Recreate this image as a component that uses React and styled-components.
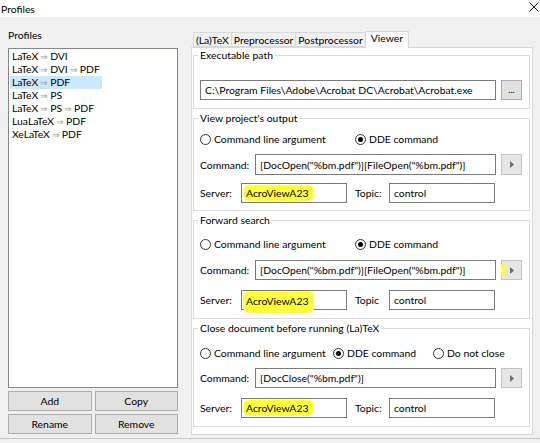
import React from 'react'
import styled, { createGlobalStyle } from 'styled-components'

const GlobalStyle = createGlobalStyle`
  html, body {
    margin: 0;
    padding: 0;
    background: #f0f0f0;
  }
  body {
    font-family: Lato, "Noto Sans", sans-serif;
    font-size: 10.4px;
    color: #000;
  }
`

const profiles = [
  ['LaTeX', 'DVI'],
  ['LaTeX', 'DVI', 'PDF'],
  ['LaTeX', 'PDF'],
  ['LaTeX', 'PS'],
  ['LaTeX', 'PS', 'PDF'],
  ['LuaLaTeX', 'PDF'],
  ['XeLaTeX', 'PDF'],
]

const tabs = ['(La)TeX', 'Preprocessor', 'Postprocessor', 'Viewer']

const App = () => {
  return (
    <>
      <GlobalStyle />
      <Window>
        <TitleBar>
          <span>Profiles</span>
          <CloseIcon viewBox="0 0 10 10">
            <path d="M0.5 0.5 L9.5 9.5 M9.5 0.5 L0.5 9.5" stroke="#111" strokeWidth="1" />
          </CloseIcon>
        </TitleBar>

        <Body>
          <LeftCol>
            <SectionLabel>Profiles</SectionLabel>
            <ListBox>
              {profiles.map((p, i) => (
                <ListItem key={i} selected={i === 2}>
                  {p.map((part, j) => (
                    <React.Fragment key={j}>
                      {j > 0 && <Arrow>⇒</Arrow>}
                      {part}
                    </React.Fragment>
                  ))}
                </ListItem>
              ))}
            </ListBox>
            <ButtonGrid>
              <PushButton>Add</PushButton>
              <PushButton>Copy</PushButton>
              <PushButton>Rename</PushButton>
              <PushButton>Remove</PushButton>
            </ButtonGrid>
          </LeftCol>

          <RightCol>
            <TabBar>
              {tabs.map((t) => (
                <Tab key={t} active={t === 'Viewer'}>{t}</Tab>
              ))}
            </TabBar>
            <TabPanel>
              <Group pb={8}>
                <legend>Executable path</legend>
                <Row pt={18}>
                  <TextBox>C:\Program Files\Adobe\Acrobat DC\Acrobat\Acrobat.exe</TextBox>
                  <SmallButton>...</SmallButton>
                </Row>
              </Group>

              <Group pb={7}>
                <legend>View project's output</legend>
                <RadioRow pt={7}>
                  <Radio w={155}>Command line argument</Radio>
                  <Radio checked>DDE command</Radio>
                </RadioRow>
                <Row pt={8}>
                  <FieldLabel w={55}>Command:</FieldLabel>
                  <TextBox h={21}>[DocOpen("%bm.pdf")][FileOpen("%bm.pdf")]</TextBox>
                  <ArrowButton h={21}><Tri /></ArrowButton>
                </Row>
                <Row pt={8}>
                  <FieldLabel w={41}>Server:</FieldLabel>
                  <ShortBox><Marker>AcroViewA23</Marker></ShortBox>
                  <FieldLabel w={34} ml={8}>Topic:</FieldLabel>
                  <ShortBox>control</ShortBox>
                </Row>
              </Group>

              <Group pb={8}>
                <legend>Forward search</legend>
                <RadioRow pt={10}>
                  <Radio w={155}>Command line argument</Radio>
                  <Radio checked>DDE command</Radio>
                </RadioRow>
                <Row pt={9}>
                  <FieldLabel w={55}>Command:</FieldLabel>
                  <TextBox>[DocOpen("%bm.pdf")][FileOpen("%bm.pdf")]</TextBox>
                  <ArrowButton>
                    <Tri />
                    <Stroke />
                  </ArrowButton>
                </Row>
                <Row pt={10}>
                  <FieldLabel w={41}>Server:</FieldLabel>
                  <ShortBox><Marker tall>AcroViewA23</Marker></ShortBox>
                  <FieldLabel w={34} ml={8}>Topic</FieldLabel>
                  <ShortBox>control</ShortBox>
                </Row>
              </Group>

              <Group pb={8}>
                <legend>Close document before running (La)TeX</legend>
                <RadioRow pt={11}>
                  <Radio w={133}>Command line argument</Radio>
                  <Radio checked w={100}>DDE command</Radio>
                  <Radio>Do not close</Radio>
                </RadioRow>
                <Row pt={8}>
                  <FieldLabel w={55}>Command:</FieldLabel>
                  <TextBox>[DocClose("%bm.pdf")]</TextBox>
                  <ArrowButton><Tri /></ArrowButton>
                </Row>
                <Row pt={10}>
                  <FieldLabel w={41}>Server:</FieldLabel>
                  <ShortBox><Marker>AcroViewA23</Marker></ShortBox>
                  <FieldLabel w={34} ml={8}>Topic:</FieldLabel>
                  <ShortBox>control</ShortBox>
                </Row>
              </Group>
            </TabPanel>
          </RightCol>
        </Body>
        <BottomEdge />
      </Window>
    </>
  )
}

const Radio = ({ checked, w, children }) => (
  <RadioItem w={w}>
    <RadioCircle checked={checked} />
    <span>{children}</span>
  </RadioItem>
)

const Tri = () => (
  <svg width="4" height="7" viewBox="0 0 4 7">
    <polygon points="0,0 4,3.5 0,7" fill="#6d6d6d" />
  </svg>
)

const Window = styled.div`
  width: 540px;
  height: 443px;
  display: flex;
  flex-direction: column;
  background: #f0f0f0;
  overflow: hidden;
`

const TitleBar = styled.div`
  height: 17px;
  flex-shrink: 0;
  background: #fff;
  display: flex;
  justify-content: space-between;
  align-items: center;
  padding: 0 1px 0 1px;
  line-height: 16px;
`

const CloseIcon = styled.svg`
  width: 10px;
  height: 10px;
  margin-top: -3px;
`

const Body = styled.div`
  flex: 1;
  min-height: 0;
  display: flex;
  padding: 0 7px 0 8px;
  gap: 13px;
`

const LeftCol = styled.div`
  width: 170px;
  flex-shrink: 0;
  display: flex;
  flex-direction: column;
  padding-top: 11px;
`

const SectionLabel = styled.div`
  line-height: 14px;
  margin-bottom: 6px;
`

const ListBox = styled.div`
  height: 340px;
  box-sizing: border-box;
  background: #fff;
  border: 1px solid #828790;
  padding: 1px 1px;
`

const ListItem = styled.div`
  width: 90px;
  height: 13px;
  line-height: 13px;
  padding-left: 2px;
  white-space: nowrap;
  background: ${(p) => (p.selected ? '#cce8ff' : 'transparent')};
`

const Arrow = styled.span`
  color: #9a9a9a;
  font-size: 9px;
  margin: 0 2px;
`

const ButtonGrid = styled.div`
  display: grid;
  grid-template-columns: 1fr 1fr;
  gap: 3px;
  margin-top: 3px;
`

const PushButton = styled.div`
  height: 20px;
  box-sizing: border-box;
  background: #e1e1e1;
  border: 1px solid #adadad;
  display: flex;
  align-items: center;
  justify-content: center;
`

const RightCol = styled.div`
  flex: 1;
  min-width: 0;
  display: flex;
  flex-direction: column;
  padding-top: 13px;
`

const TabBar = styled.div`
  display: flex;
  align-items: flex-end;
  height: 17px;
  padding-left: 3px;
  position: relative;
  z-index: 1;
`

const Tab = styled.div`
  height: ${(p) => (p.active ? '17px' : '15px')};
  box-sizing: border-box;
  padding: 0 ${(p) => (p.active ? '5px' : '2px')};
  line-height: ${(p) => (p.active ? '13px' : '14px')};
  background: ${(p) => (p.active ? '#fff' : '#f0f0f0')};
  border: 1px solid #d9d9d9;
  border-bottom: ${(p) => (p.active ? 'none' : '1px solid #d9d9d9')};
  margin-left: -1px;
  margin-bottom: ${(p) => (p.active ? '-1px' : '0')};
  white-space: nowrap;
`

const TabPanel = styled.div`
  height: 388px;
  box-sizing: border-box;
  background: #fff;
  border: 1px solid #d9d9d9;
  padding: 0 2px 0 1px;
  display: flex;
  flex-direction: column;
  gap: 2px;
`

const Group = styled.fieldset`
  margin: 0;
  border: 1px solid #dcdcdc;
  padding: 0 7px ${(p) => p.pb}px 6px;
  min-width: 0;

  legend {
    padding: 0 2px;
    margin-left: -2px;
    line-height: 14px;
  }
`

const Row = styled.div`
  display: flex;
  align-items: center;
  padding-top: ${(p) => p.pt}px;
`

const RadioRow = styled.div`
  display: flex;
  align-items: center;
  height: 14px;
  padding-top: ${(p) => p.pt}px;
`

const RadioItem = styled.div`
  display: flex;
  align-items: center;
  gap: 3px;
  width: ${(p) => (p.w ? `${p.w}px` : 'auto')};
  flex-shrink: 0;
  white-space: nowrap;
`

const RadioCircle = styled.span`
  width: 11px;
  height: 11px;
  flex-shrink: 0;
  box-sizing: border-box;
  border: 1px solid #333;
  border-radius: 50%;
  display: flex;
  align-items: center;
  justify-content: center;

  &::after {
    content: '';
    width: 5px;
    height: 5px;
    border-radius: 50%;
    background: ${(p) => (p.checked ? '#000' : 'transparent')};
  }
`

const FieldLabel = styled.div`
  width: ${(p) => p.w}px;
  margin-left: ${(p) => p.ml || 0}px;
  flex-shrink: 0;
`

const TextBox = styled.div`
  flex: 1;
  min-width: 0;
  height: ${(p) => p.h || 20}px;
  box-sizing: border-box;
  border: 1px solid #7a7a7a;
  background: #fff;
  padding: 0 4px;
  display: flex;
  align-items: center;
  white-space: nowrap;
  overflow: hidden;
`

const ShortBox = styled(TextBox)`
  flex: 0 0 106px;
  overflow: visible;
`

const Marker = styled.span`
  background: #ffff3a;
  border-radius: 6px;
  padding: ${(p) => (p.tall ? '3px 6px 5px 3px' : '1px 6px 1px 3px')};
  margin-left: -3px;
  margin-top: ${(p) => (p.tall ? '4px' : '0')};
  line-height: 14px;
`

const SmallButton = styled.div`
  width: 21px;
  height: 20px;
  flex-shrink: 0;
  box-sizing: border-box;
  margin-left: 5px;
  background: #e1e1e1;
  border: 1px solid #adadad;
  display: flex;
  align-items: flex-end;
  justify-content: center;
  line-height: 14px;
  font-size: 9px;
  padding-bottom: 2px;
`

const ArrowButton = styled.div`
  position: relative;
  width: 21px;
  height: ${(p) => p.h || 20}px;
  flex-shrink: 0;
  box-sizing: border-box;
  margin-left: 5px;
  background: #e6e6e6;
  border: 1px solid #c4c4c4;
  display: flex;
  align-items: center;
  justify-content: center;
`

const Stroke = styled.span`
  position: absolute;
  left: -1px;
  top: 3px;
  width: 4px;
  height: 13px;
  border-radius: 2px;
  background: #ffff3a;
`

const BottomEdge = styled.div`
  height: 4px;
  flex-shrink: 0;
  border-top: 1px solid #c8c8c8;
  background: #f0f0f0;
`

export default App
